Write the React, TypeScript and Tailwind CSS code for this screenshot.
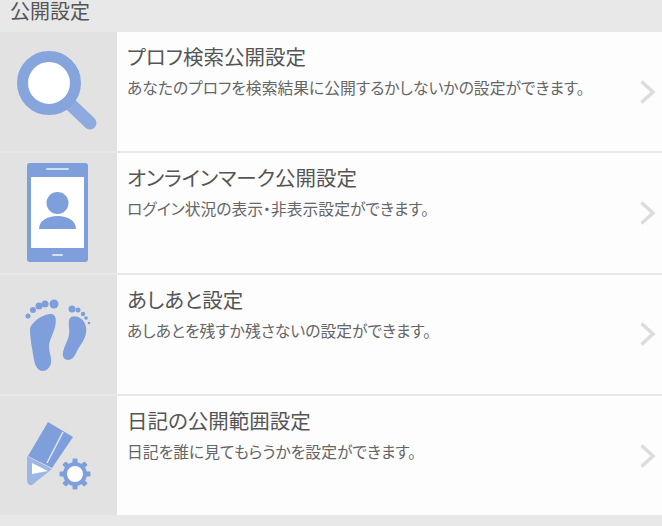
const blue = "#7e9fdb";

const SearchIcon = () => (
  <svg width="117" height="119" viewBox="0 0 117 119">
    <line x1="68" y1="70" x2="90" y2="91" stroke="#8dabdf" strokeWidth="13" strokeLinecap="round" />
    <circle cx="49" cy="51" r="26.500" fill="#fff" stroke="#86a5dc" strokeWidth="11" />
  </svg>
);

const PhoneIcon = () => (
  <svg width="117" height="119" viewBox="0 0 117 119">
    <rect x="27" y="10" width="61" height="99" rx="3" fill={blue} />
    <rect x="31" y="24" width="53" height="71" fill="#fff" />
    <rect x="46" y="15" width="23" height="2" rx="1" fill="#d5dff2" />
    <rect x="52" y="101" width="11" height="2" rx="1" fill="#d5dff2" />
    <circle cx="57.500" cy="50" r="11" fill={blue} />
    <path d="M39 76c0-8 8-13 18.500-13S76 68 76 76z" fill={blue} />
  </svg>
);

const FeetIcon = () => (
  <svg width="117" height="119" viewBox="0 0 117 119">
    <path d="M30 54C31 47 44 38 52 39C57 40 56 48 55 52C53 60 49 65 49 72C49 78 52 82 51 88C50 93 46 96 43 96C38 96 35 91 34 85C33 77 30 66 30 54Z" fill={blue} />
    <circle cx="28" cy="41" r="2.500" fill={blue} />
    <circle cx="33" cy="35" r="3" fill={blue} />
    <circle cx="39" cy="31" r="3.500" fill={blue} />
    <circle cx="45" cy="29" r="3.500" fill={blue} />
    <circle cx="54" cy="29" r="4.500" fill={blue} />
    <path d="M69 45C71 40 76 41 80 43C85 46 87 52 86 58C85 65 80 70 77 76C75 81 72 85 68 85C64 85 62 81 63 77C64 71 68 66 69 60C70 55 68 50 69 45Z" fill={blue} />
    <circle cx="72" cy="34" r="3.500" fill={blue} />
    <circle cx="78" cy="35" r="2.500" fill={blue} />
    <circle cx="83" cy="39" r="2.200" fill={blue} />
    <circle cx="86" cy="43" r="1.800" fill={blue} />
    <circle cx="89" cy="48" r="1.300" fill={blue} />
  </svg>
);

const PencilIcon = () => (
  <svg width="117" height="119" viewBox="0 0 117 119">
    <path d="M48 26L73 41L52 72L28 60z" fill={blue} />
    <path d="M63 36L47 67" stroke="#dfe7f6" strokeWidth="1.500" fill="none" />
    <path d="M27 60L52 73L32 89C29 90 27 87 27 84z" fill="#9db6e3" />
    <path d="M32 67L48 75L32 78z" fill="#fff" />
    <g transform="translate(75 78)">
      {[0, 45, 90, 135, 180, 225, 270, 315].map((deg) => (
        <rect key={deg} x="-2.500" y="-15.500" width="5" height="6" rx="1" fill={blue} transform={`rotate(${deg})`} />
      ))}
      <circle r="10" fill="#fff" stroke={blue} strokeWidth="4" />
    </g>
  </svg>
);

const settings = [
  {
    title: "プロフ検索公開設定",
    description: "あなたのプロフを検索結果に公開するかしないかの設定ができます。",
    icon: <SearchIcon />,
  },
  {
    title: "オンラインマーク公開設定",
    description: "ログイン状況の表示・非表示設定ができます。",
    icon: <PhoneIcon />,
  },
  {
    title: "あしあと設定",
    description: "あしあとを残すか残さないの設定ができます。",
    icon: <FeetIcon />,
  },
  {
    title: "日記の公開範囲設定",
    description: "日記を誰に見てもらうかを設定ができます。",
    icon: <PencilIcon />,
  },
];

export default function App() {
  return (
    <div
      className="h-[526px] w-[662px] overflow-hidden bg-[#e9e8e9] text-[#555] [font-feature-settings:'palt']"
      style={{ fontFamily: '"Liberation Sans", "Noto Sans CJK JP", sans-serif' }}
    >
      <h2 className="h-8 pl-[10px] text-[20px] leading-[25px] font-normal text-[#555]">公開設定</h2>
      <div className="flex flex-col gap-[2px]">
        {settings.map((item) => (
          <div key={item.title} className="flex h-[119.300px] bg-[#fdfdfd]">
            <div className="h-full w-[117px] shrink-0 bg-[#e2e2e2]">{item.icon}</div>
            <div className="flex-1 pt-[13px] pl-[10px]">
              <div className="text-[20.500px] leading-[26px] text-[#555]">{item.title}</div>
              <div className="mt-[8px] text-[15.800px] leading-[20px] text-[#666]">{item.description}</div>
            </div>
            <div className="flex w-[23px] shrink-0 items-center">
              <svg width="18" height="26" viewBox="0 0 18 26">
                <path d="M2.500 2.500L14 13 2.500 23.500" fill="none" stroke="#dcdcdc" strokeWidth="3.500" />
              </svg>
            </div>
          </div>
        ))}
      </div>
    </div>
  );
}
